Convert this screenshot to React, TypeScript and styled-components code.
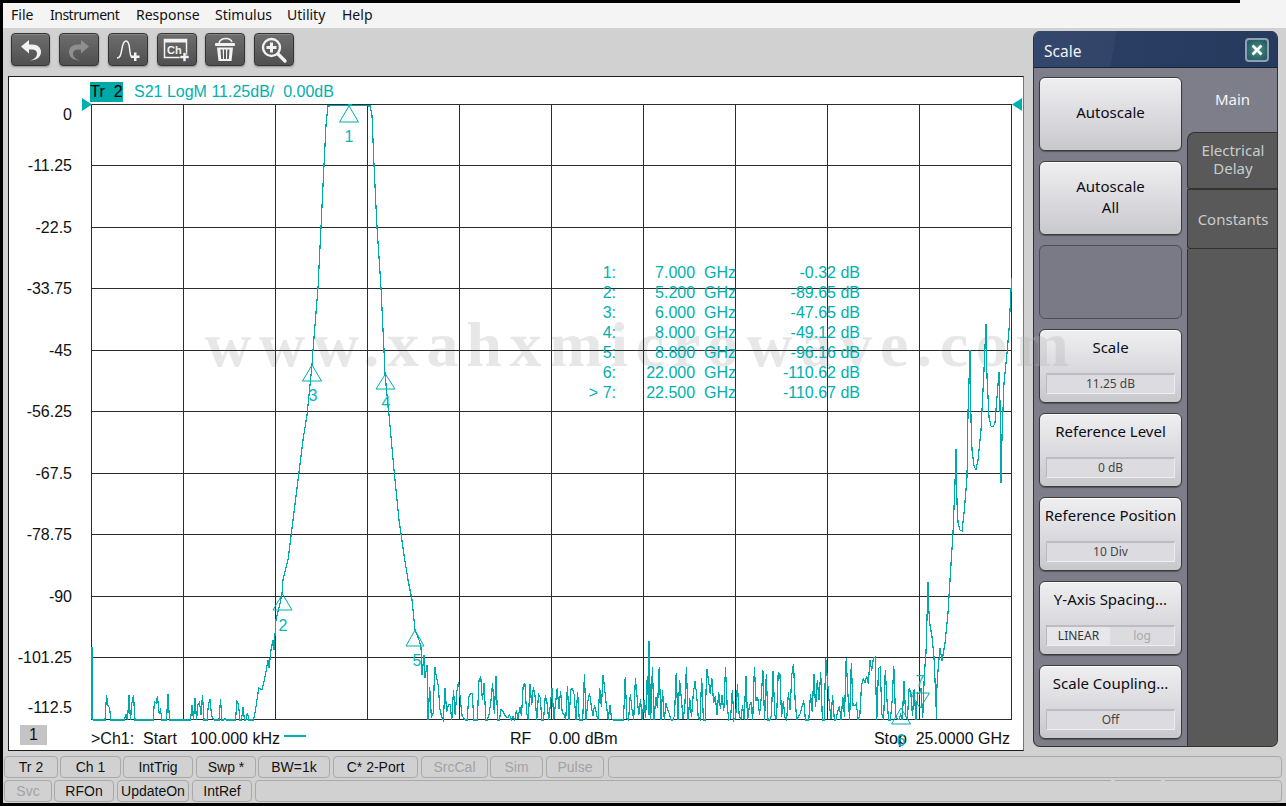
import React from "react";
import styled, { createGlobalStyle } from "styled-components";

const Global = createGlobalStyle`
  html, body { margin: 0; padding: 0; background: #000; }
  #root { width: 1286px; height: 806px; }
`;

const UI = `"Noto Sans", "Open Sans", sans-serif`;
const CHART = `"Liberation Sans", Arial, sans-serif`;
const TEAL = "#00b0b0";

const Window = styled.div`
  position: relative;
  width: 1286px;
  height: 806px;
  overflow: hidden;
  background: #000;
`;
const Surface = styled.div`
  position: absolute;
  left: 3px;
  top: 3px;
  width: 1283px;
  height: 800px;
  background: #d1d1d1;
`;
const MenuBar = styled.nav`
  position: absolute;
  left: 3px;
  top: 3px;
  width: 1283px;
  height: 25px;
  background: #f4f4f4;
  font: 14px ${UI};
  color: #111;
  &::after {
    content: "";
    position: absolute;
    left: 1237px;
    top: -3px;
    width: 46px;
    height: 3px;
    background: #f4f4f4;
  }
`;
const MenuItem = styled.span<{ $x: number; $tight?: boolean }>`
  position: absolute;
  left: ${(p) => p.$x - 3}px;
  top: 2px;
  line-height: 20px;
  white-space: nowrap;
  ${(p) => (p.$tight ? "letter-spacing: -0.5px;" : "")}
`;
const ToolBtn = styled.button<{ $x: number; $w: number }>`
  position: absolute;
  left: ${(p) => p.$x}px;
  top: 33px;
  width: ${(p) => p.$w}px;
  height: 33px;
  padding: 0;
  box-sizing: border-box;
  border: 1px solid #343434;
  border-radius: 4px;
  background: linear-gradient(#6d6d6d, #505050);
  box-shadow: inset 0 1px 0 #858585, 0 1px 2px #8a8a8a;
  display: flex;
  align-items: center;
  justify-content: center;
`;
const ChartPanel = styled.section`
  position: absolute;
  left: 8px;
  top: 76px;
  width: 1016px;
  height: 675px;
  box-sizing: border-box;
  background: #fff;
  border: 1px solid #1c1c1c;
  border-right: 1px solid #777;
  font: 16px ${CHART};
  color: #111;
`;
const ChartSvg = styled.svg`
  position: absolute;
  left: -1px;
  top: -1px;
  z-index: 6;
`;
const TraceTag = styled.span`
  position: absolute;
  left: 81px;
  top: 5px;
  width: 33px;
  height: 20px;
  background: #00a8a8;
  color: #000;
  line-height: 20px;
  text-align: center;
  white-space: pre;
`;
const TraceInfo = styled.span`
  position: absolute;
  left: 125px;
  top: 5px;
  line-height: 20px;
  color: ${TEAL};
  white-space: pre;
`;
const YLabel = styled.span<{ $y: number }>`
  position: absolute;
  right: 951px;
  top: ${(p) => p.$y - 86}px;
  line-height: 20px;
  white-space: nowrap;
`;
const ChannelBox = styled.span`
  position: absolute;
  left: 11px;
  top: 648px;
  width: 27px;
  height: 20px;
  background: #c4c4c4;
  text-align: center;
  line-height: 20px;
`;
const FootText = styled.span<{ $x?: number; $right?: number }>`
  position: absolute;
  ${(p) => (p.$x !== undefined ? `left: ${p.$x - 9}px;` : "")}
  ${(p) => (p.$right !== undefined ? `right: ${p.$right}px;` : "")}
  top: 652px;
  line-height: 20px;
  white-space: pre;
`;
const FootLine = styled.span`
  position: absolute;
  left: 275px;
  top: 658px;
  width: 22px;
  height: 2px;
  background: ${TEAL};
`;
const MarkerRow = styled.div<{ $y: number }>`
  position: absolute;
  left: 0;
  top: ${(p) => p.$y - 86}px;
  width: 100%;
  height: 20px;
  line-height: 20px;
  color: ${TEAL};
  z-index: 7;
`;
const MarkerCol = styled.span<{ $right: number }>`
  position: absolute;
  right: ${(p) => 1023 - p.$right}px;
  white-space: pre;
`;
const Watermark = styled.div`
  position: absolute;
  left: 205px;
  top: 310px;
  font: bold 64px "Liberation Serif", serif;
  letter-spacing: 7.7px;
  color: rgba(176, 176, 176, 0.3);
  white-space: nowrap;
  pointer-events: none;
  z-index: 5;
  line-height: 70px;
`;
const SidePanel = styled.aside`
  position: absolute;
  left: 1033px;
  top: 31px;
  width: 245px;
  height: 716px;
  border-radius: 7px;
  overflow: hidden;
  background: #7e7e8a;
  box-sizing: border-box;
  border: 1px solid #33332a;
  border-top: none;
`;
const PanelHead = styled.header`
  position: absolute;
  left: -1px;
  top: 0;
  width: 245px;
  height: 37px;
  background: linear-gradient(100deg, #34476c 0%, #324569 33%, #2a3d62 33.5%, #263a5e 100%);
  border-bottom: 1px solid #1a2438;
  box-sizing: border-box;
  color: #f2f2f2;
  font: 15.5px/40px ${UI};
  padding-left: 11px;
`;
const CloseBtn = styled.span`
  position: absolute;
  left: 212px;
  top: 7px;
  width: 24px;
  height: 24px;
  box-sizing: border-box;
  border: 2px solid #8fa0b4;
  border-radius: 4px;
  background: radial-gradient(circle, #4c9488 0%, #2f6a6c 60%, #25535c 100%);
  display: flex;
  align-items: center;
  justify-content: center;
`;
const Soft = styled.button<{ $y: number; $off?: boolean }>`
  position: absolute;
  left: 5px;
  top: ${(p) => p.$y - 31}px;
  width: 143px;
  height: 74px;
  box-sizing: border-box;
  padding: 0 0 3px;
  border: 1px solid ${(p) => (p.$off ? "#4c4c52" : "#3c3c3c")};
  border-radius: 6px;
  background: ${(p) => (p.$off ? "#7a7a86" : "linear-gradient(#efeff2, #c9c9cd)")};
  box-shadow: ${(p) => (p.$off ? "none" : "inset 0 1px 0 #fff, 0 1px 1px #555")};
  font: 15px/21px ${UI};
  color: #0c0c14;
  text-align: center;
`;
const SoftLabel = styled.span`
  position: absolute;
  left: 0;
  right: 0;
  top: 7px;
  line-height: 21px;
  white-space: nowrap;
`;
const ValueField = styled.span`
  position: absolute;
  left: 6px;
  top: 43px;
  width: 129px;
  height: 21px;
  box-sizing: border-box;
  background: #dcdce0;
  border-top: 2px solid #bcbcc2;
  border-left: 1px solid #b8b8be;
  border-right: 1px solid #ececf0;
  border-bottom: 1px solid #eeeef2;
  font: 12px/18px ${UI};
  color: #444;
`;
const Toggle = styled.span<{ $on?: boolean }>`
  position: absolute;
  top: 0;
  bottom: 0;
  ${(p) => (p.$on ? "left: 0; width: 63px; background: #e7e7ea; color: #30343c;" : "left: 63px; right: 0; color: #a8a8ac;")}
  font: 12px/18px ${UI};
`;
const TabColumn = styled.div`
  position: absolute;
  left: 153px;
  top: 37px;
  width: 91px;
  bottom: 0;
`;
const MainTab = styled.div`
  height: 64px;
  color: #f5f5f5;
  text-align: center;
  font: 15px/62px ${UI};
`;
const Tab = styled.div<{ $h: number }>`
  height: ${(p) => p.$h}px;
  box-sizing: border-box;
  background: #595959;
  border: 1px solid #33332a;
  border-right: none;
  border-bottom-left-radius: 3px;
  color: #c8ccd0;
  text-align: center;
  font: 15px/18px ${UI};
  display: flex;
  align-items: center;
  justify-content: center;
`;
const FirstTab = styled(Tab)`
  border-top-left-radius: 8px;
  padding-bottom: 3px;
`;
const TabRest = styled.div`
  position: absolute;
  top: 181px;
  bottom: 0;
  left: 0;
  right: 0;
  background: #595959;
  border-left: 1px solid #33332a;
`;
const StatusCell = styled.span<{ $x: number; $y: number; $w: number; $off?: boolean }>`
  position: absolute;
  left: ${(p) => p.$x}px;
  top: ${(p) => p.$y}px;
  width: ${(p) => p.$w}px;
  height: 22px;
  box-sizing: border-box;
  border: 1px solid #a9a9a9;
  border-radius: 4px;
  text-align: center;
  font: 14px/20px ${CHART};
  color: ${(p) => (p.$off ? "#a3a3a3" : "#111")};
  white-space: nowrap;
`;
const Notch = styled.span<{ $x: number }>`
  position: absolute;
  left: ${(p) => p.$x}px;
  top: 780px;
  width: 4px;
  height: 2px;
  background: #d1d1d1;
`;

/* ---------- trace data ---------- */
function buildTrace(): string {
  let seed = 20240611;
  const rnd = () => {
    seed = (seed * 1664525 + 1013904223) % 4294967296;
    return seed / 4294967296;
  };
  const pts: [number, number][] = [[92, 647], [92, 719]];
  const active = (x: number) => {
    const clusters = [[106, 112], [124, 135], [150, 168], [192, 203], [208, 226], [236, 250]];
    return clusters.some(([a, b]) => x >= a && x <= b);
  };
  for (let x = 93; x < 255; x += 1.5) {
    if (active(x) && rnd() > 0.45) pts.push([x, 719 - rnd() * 26]);
    else pts.push([x, 720]);
  }
  pts.push(
    [255, 713], [258, 693], [259, 688], [262, 690], [265, 677], [268, 660], [269, 668], [271, 650],
    [273, 640], [274, 650], [276, 620], [279, 608], [282, 594], [283, 580], [288, 560], [293, 520],
    [298, 480], [303, 440], [307, 415], [312, 365], [313, 350], [318, 288], [321, 227], [324, 165],
    [326, 125], [328, 106], [350, 105], [370, 106], [372, 115], [374, 165], [377, 227], [381, 288],
    [384, 350], [385, 374], [389, 415], [394, 470], [399, 520], [404, 555], [408, 580], [412, 600],
    [415, 630], [419, 640], [421, 647], [422, 675], [424, 655], [425, 678], [427, 665]
  );
  const env = (x: number) => {
    if (x < 445) return 54;
    if (x < 480) return 42;
    if (x < 500) return 50;
    if (x < 520) return 16;
    if (x < 580) return 38;
    if (x < 640) return 48;
    if (x < 760) return 52;
    if (x < 800) return 56;
    return 64;
  };
  for (let x = 428; x < 926; x += 1.7) {
    const r = rnd();
    if (r < 0.3) pts.push([x, 720]);
    else pts.push([x, 719 - env(x) * Math.pow(rnd(), 1.15)]);
    if (Math.abs(x - 649) < 0.9) pts.push([649, 641]);
  }
  const rise: [number, number][] = [
    [926, 653], [928, 582], [928, 600], [930, 625], [932, 637], [934, 657], [936, 703], [936.5, 719], [936, 703],
    [938, 670], [940, 648], [942, 661], [945, 643], [948, 613], [950, 580], [953, 533], [955, 483],
    [956, 449], [957, 503], [958, 522], [960, 530], [962, 531], [964, 513], [966, 490], [967, 477], [968, 413], [970, 350],
    [971, 420], [972, 450], [974, 466], [976, 470], [978, 460], [981, 430], [984, 370], [986, 324], [987, 377],
    [989, 417], [991, 426], [993, 427], [995, 423], [997, 397], [999, 372], [1000, 403], [1001, 483], [1002, 437],
    [1004, 383], [1007, 353], [1009, 330], [1011, 290], [1011.6, 278]
  ];
  return pts.concat(rise).map(([x, y]) => `${x.toFixed(1)},${y.toFixed(1)}`).join(" ");
}
const TRACE = buildTrace();

const GRID_X = [91, 183, 275, 367, 459, 551, 643, 735, 827, 919, 1011];
const GRID_Y = [104, 165, 227, 288, 350, 411, 473, 534, 596, 657, 719];
const Y_LABELS: [string, number][] = [
  ["0", 114], ["-11.25", 165], ["-22.5", 227], ["-33.75", 288], ["-45", 350], ["-56.25", 411],
  ["-67.5", 473], ["-78.75", 534], ["-90", 596], ["-101.25", 657], ["-112.5", 707],
];
const MARKERS: [string, string, string, number][] = [
  ["1:", "7.000  GHz", "-0.32 dB", 272],
  ["2:", "5.200  GHz", "-89.65 dB", 292],
  ["3:", "6.000  GHz", "-47.65 dB", 312],
  ["4:", "8.000  GHz", "-49.12 dB", 332],
  ["5:", "8.800  GHz", "-96.16 dB", 352],
  ["6:", "22.000  GHz", "-110.62 dB", 372],
  ["> 7:", "22.500  GHz", "-110.67 dB", 392],
];
// apex x, apex y, base half width, height (negative flips), label, label x, label y
const TRI: [number, number, number, number, string, number, number][] = [
  [349, 106, 9.5, 16, "1", 349, 142],
  [282.5, 594, 9.5, 16, "2", 283, 631],
  [312, 365, 9.5, 16, "3", 313, 401],
  [385.5, 374, 9.5, 15, "4", 386, 408],
  [415, 630, 9, 16, "5", 417, 666],
  [901, 708, 9.5, 16, "6", 901, 746],
  [920, 708, -9.5, -15, "7", 920, 687],
];

const Chart = () => (
  <ChartSvg width={1016} height={675} viewBox="8 76 1016 675">
    <g stroke="#2c2c2c" strokeWidth={1} shapeRendering="crispEdges">
      {GRID_X.map((x) => <line key={x} x1={x + 0.5} x2={x + 0.5} y1={104} y2={720} />)}
      {GRID_Y.map((y) => <line key={y} x1={91} x2={1012} y1={y + 0.5} y2={y + 0.5} />)}
    </g>
    <polygon points="82,98 82,111 92,104.5" fill={TEAL} />
    <polygon points="1022,98 1022,111 1012,104.5" fill={TEAL} />
    <polyline points={TRACE} fill="none" stroke="#00aaaa" strokeWidth={1.2} shapeRendering="crispEdges" />
    <g fill="none" stroke="#00aaaa" strokeWidth={1}>
      {TRI.map(([x, y, w, h, l]) => (
        <polygon key={l} points={`${x},${y} ${x - Math.abs(w)},${y + h} ${x + Math.abs(w)},${y + h}`} />
      ))}
    </g>
    {TRI.map(([, , , , l, lx, ly]) => (
      <text key={l} x={lx} y={ly} textAnchor="middle" fontFamily={CHART} fontSize={16} fill="#00b8b8">{l}</text>
    ))}
  </ChartSvg>
);

/* ---------- toolbar icons ---------- */
const Ico = styled.svg`
  display: block;
`;
const IconUndo = () => (
  <Ico width="28" height="26" viewBox="0 0 28 26">
    <path d="M4 9.500 L12 3 V7.500 H15 C21 7.500 24 11 24 15 C24 20 20 23 13 23.500 C18 22 20 19.500 20 16.500 C20 14 18 12.500 15 12.500 H12 V16.500 Z" fill="#f2f2f2" />
  </Ico>
);
const IconRedo = () => (
  <Ico width="28" height="26" viewBox="0 0 28 26">
    <path d="M24 9.500 L16 3 V7.500 H13 C7 7.500 4 11 4 15 C4 20 8 23 15 23.500 C10 22 8 19.500 8 16.500 C8 14 10 12.500 13 12.500 H16 V16.500 Z" fill="#8f8f8f" />
  </Ico>
);
const IconPulse = () => (
  <Ico width="30" height="28" viewBox="0 0 30 28">
    <path d="M4 22 C7.500 22 8 18 9 12.500 C10 7 11 5 13 5 C15 5 16 7 16.500 12 C17 17 17.300 20 18.500 21" fill="none" stroke="#f2f2f2" strokeWidth="1.500" />
    <path d="M21 16.500 H23.500 V19.500 H26.500 V22 H23.500 V25 H21 V22 H18 V19.500 H21 Z" fill="#f2f2f2" />
  </Ico>
);
const IconCh = () => (
  <Ico width="32" height="28" viewBox="0 0 32 28">
    <rect x="3.500" y="3.500" width="22" height="18" fill="none" stroke="#f2f2f2" strokeWidth="1.500" />
    <rect x="3.500" y="3.500" width="22" height="3" fill="#f2f2f2" />
    <text x="6" y="18" fontFamily={CHART} fontWeight="bold" fontSize="11" fill="#f2f2f2">Ch</text>
    <path d="M22 16.500 H25 V19.500 H28 V22.500 H25 V25.500 H22 V22.500 H19 V19.500 H22 Z" fill="#f2f2f2" stroke="#555" strokeWidth=".6" />
  </Ico>
);
const IconTrash = () => (
  <Ico width="26" height="28" viewBox="0 0 26 28">
    <path d="M7 7 C8 3.500 11 2.500 14 2.500 C17 2.500 19 3.500 20 6" fill="none" stroke="#f2f2f2" strokeWidth="1.500" />
    <rect x="3" y="7" width="20" height="3" rx="1" fill="#f2f2f2" />
    <path d="M5 11.500 H21 L19.500 25 H6.500 Z M8.500 13.500 L9.200 23 H11 L10.700 13.500 Z M12 13.500 V23 H14 V13.500 Z M15.300 13.500 L15 23 H16.800 L17.500 13.500 Z" fill="#f2f2f2" fillRule="evenodd" />
  </Ico>
);
const IconZoom = () => (
  <Ico width="30" height="28" viewBox="0 0 30 28">
    <circle cx="12.500" cy="11.500" r="8.500" fill="none" stroke="#f2f2f2" strokeWidth="2.400" />
    <path d="M11 6.500 H14 V10 H17.500 V13 H14 V16.500 H11 V13 H7.500 V10 H11 Z" fill="#f2f2f2" />
    <path d="M19 18 L26 25" stroke="#f2f2f2" strokeWidth="3.400" strokeLinecap="round" />
  </Ico>
);

const SOFT: { y: number; label: string; value?: string; toggle?: boolean }[] = [
  { y: 329, label: "Scale", value: "11.25 dB" },
  { y: 413, label: "Reference Level", value: "0 dB" },
  { y: 497, label: "Reference Position", value: "10 Div" },
  { y: 581, label: "Y-Axis Spacing...", toggle: true },
  { y: 665, label: "Scale Coupling...", value: "Off" },
];
const ROW1: [string, number, number, boolean?][] = [
  ["Tr 2", 4, 54], ["Ch 1", 60, 61], ["IntTrig", 123, 70], ["Swp *", 196, 60], ["BW=1k", 258, 72],
  ["C* 2-Port", 333, 85], ["SrcCal", 421, 67, true], ["Sim", 490, 53, true], ["Pulse", 546, 58, true],
  ["", 608, 674],
];
const ROW2: [string, number, number, boolean?][] = [
  ["Svc", 4, 48, true], ["RFOn", 54, 60], ["UpdateOn", 117, 72], ["IntRef", 192, 60], ["", 255, 1027],
];
const MENU: [string, number][] = [
  ["File", 11], ["Instrument", 50], ["Response", 136], ["Stimulus", 215], ["Utility", 287], ["Help", 342],
];

export default function App() {
  return (
    <Window>
      <Global />
      <Surface />
      <MenuBar>
        {MENU.map(([t, x]) => <MenuItem key={t} $x={x} $tight={t === "Instrument"}>{t}</MenuItem>)}
      </MenuBar>
      <ToolBtn $x={11} $w={39}><IconUndo /></ToolBtn>
      <ToolBtn $x={59} $w={40}><IconRedo /></ToolBtn>
      <ToolBtn $x={108} $w={40}><IconPulse /></ToolBtn>
      <ToolBtn $x={157} $w={40}><IconCh /></ToolBtn>
      <ToolBtn $x={205} $w={40}><IconTrash /></ToolBtn>
      <ToolBtn $x={254} $w={40}><IconZoom /></ToolBtn>

      <ChartPanel>
        <Chart />
        <TraceTag>{"Tr  2"}</TraceTag>
        <TraceInfo>{"S21 LogM 11.25dB/  0.00dB"}</TraceInfo>
        {Y_LABELS.map(([t, y]) => <YLabel key={t} $y={y}>{t}</YLabel>)}
        {MARKERS.map(([a, b, c, y]) => (
          <MarkerRow key={a} $y={y}>
            <MarkerCol $right={616}>{a}</MarkerCol>
            <MarkerCol $right={736}>{b}</MarkerCol>
            <MarkerCol $right={860}>{c}</MarkerCol>
          </MarkerRow>
        ))}
        <ChannelBox>1</ChannelBox>
        <FootText $x={91}>{">Ch1:  Start   100.000 kHz"}</FootText>
        <FootLine />
        <FootText $x={510}>{"RF    0.00 dBm"}</FootText>
        <FootText $right={13}>{"Stop  25.0000 GHz"}</FootText>
      </ChartPanel>

      <SidePanel>
        <PanelHead>
          Scale
          <CloseBtn>
            <Ico width="12" height="12" viewBox="0 0 12 12">
              <path d="M1.500 1.500 L10.500 10.500 M10.500 1.500 L1.500 10.500" stroke="#fff" strokeWidth="2.800" />
            </Ico>
          </CloseBtn>
        </PanelHead>
        <Soft $y={77}>Autoscale</Soft>
        <Soft $y={161}>Autoscale<br />All</Soft>
        <Soft $y={245} $off />
        {SOFT.map((s) => (
          <Soft key={s.y} $y={s.y}>
            <SoftLabel>{s.label}</SoftLabel>
            <ValueField>
              {s.toggle ? (
                <>
                  <Toggle $on>LINEAR</Toggle>
                  <Toggle>log</Toggle>
                </>
              ) : s.value}
            </ValueField>
          </Soft>
        ))}
        <TabColumn>
          <MainTab>Main</MainTab>
          <FirstTab $h={57}>Electrical<br />Delay</FirstTab>
          <Tab $h={60}>Constants</Tab>
          <TabRest />
        </TabColumn>
      </SidePanel>

      {ROW1.map(([t, x, w, off]) => <StatusCell key={x} $x={x} $y={756} $w={w} $off={off}>{t}</StatusCell>)}
      {ROW2.map(([t, x, w, off]) => <StatusCell key={x} $x={x} $y={780} $w={w} $off={off}>{t}</StatusCell>)}
      <Notch $x={1111} />
      <Notch $x={1161} />
      <Watermark>www.xahxmicrowave.com</Watermark>
    </Window>
  );
}
